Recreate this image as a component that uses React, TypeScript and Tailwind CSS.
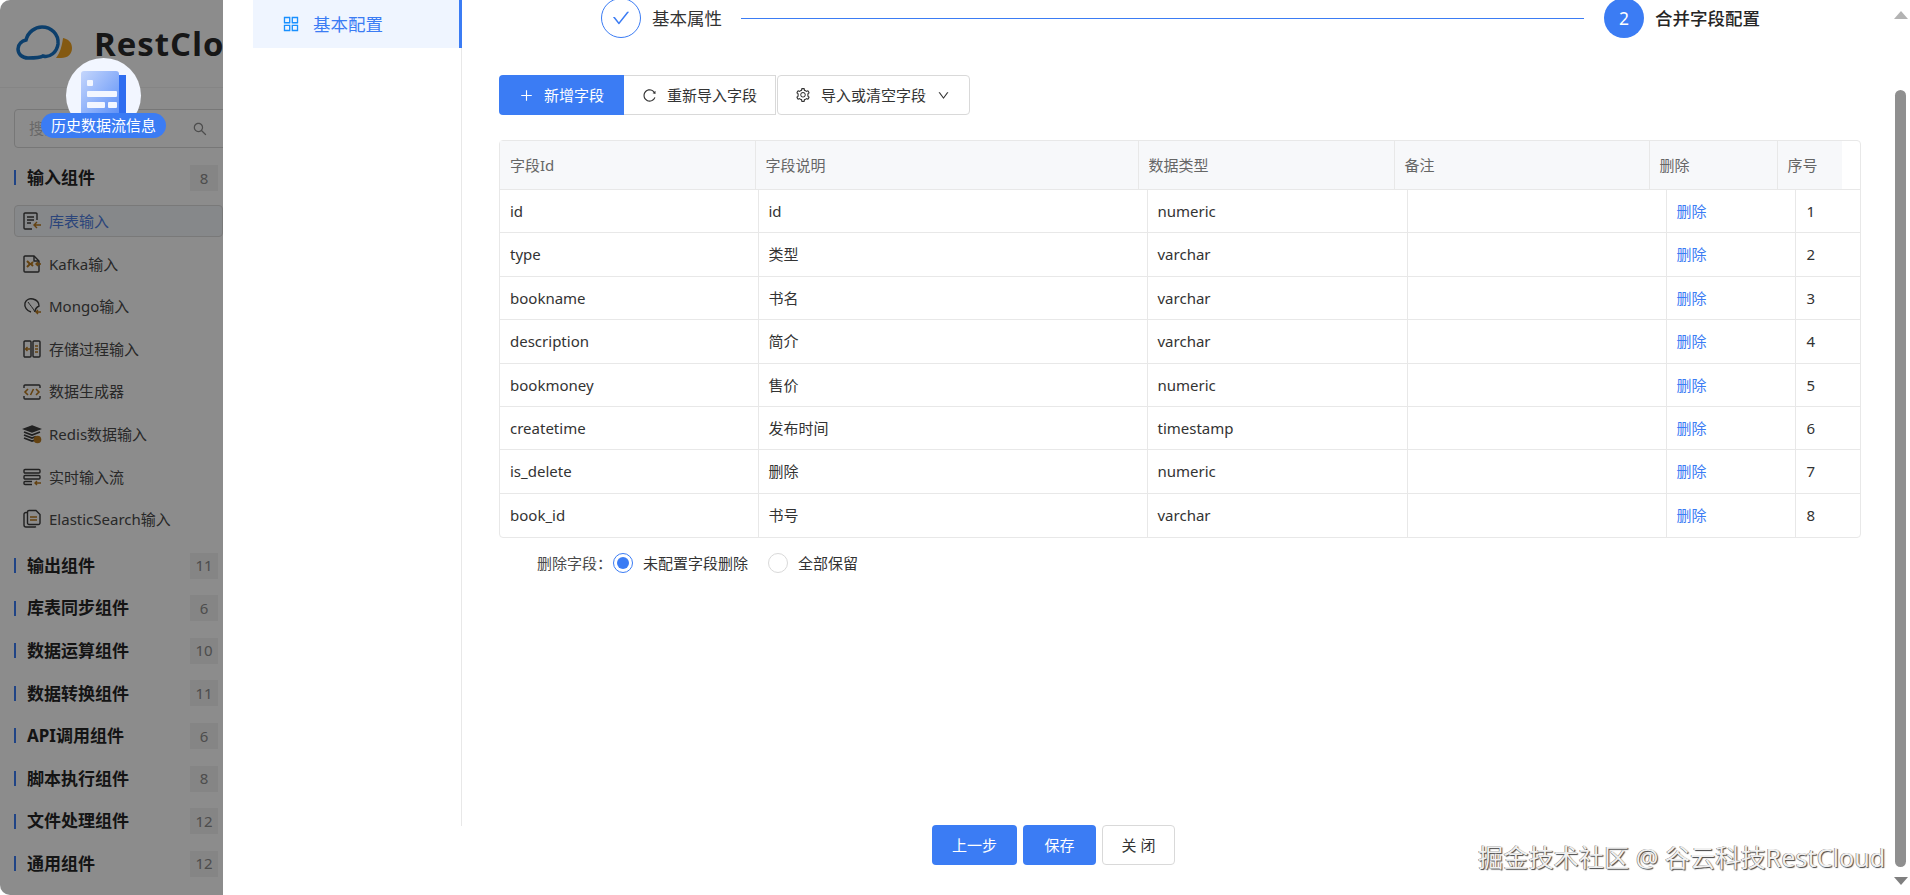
import React from "react";
import {
  AiOutlinePlus,
  AiOutlineReload,
  AiOutlineSetting,
  AiOutlineDown,
  AiOutlineCheck,
  AiOutlineSearch,
  AiOutlineAppstore,
} from "react-icons/ai";

const FONT = { fontFamily: '"Noto Sans", "Noto Sans CJK SC", sans-serif' };

const I = ({ children }: { children: React.ReactNode }) => (
  <svg viewBox="0 0 20 20" className="w-[20px] h-[20px] shrink-0" fill="none" strokeWidth="1.4" stroke="#3d3d3d">
    {children}
  </svg>
);
const O = "#b7791f";

const icons: Record<string, React.ReactNode> = {
  table: (
    <I>
      <path d="M15 9V3a1 1 0 0 0-1-1H3a1 1 0 0 0-1 1v14a1 1 0 0 0 1 1h7" />
      <path d="M5 6h7M5 9h7M5 12h4" />
      <path d="M19 14h-7M15 11l-3 3 3 3" stroke={O} />
    </I>
  ),
  kafka: (
    <I>
      <path d="M12 2H3a1 1 0 0 0-1 1v14a1 1 0 0 0 1 1h13a1 1 0 0 0 1-1V7z" />
      <path d="M12 2v5h5" />
      <path d="M5 7l3 3-3 3M8 10h2M11 8l-2 2 2 2" stroke={O} strokeWidth="2" />
      <path d="M19 10h-5M16 8l-2 2 2 2" stroke={O} />
    </I>
  ),
  mongo: (
    <I>
      <path d="M9 16C5 15 2 11 3 7c1-3 4-5 8-4 4 1 6 3 6 7-2 1-4 3-4 6" />
      <path d="M6 6c2 3 5 6 7 10" strokeWidth="1" />
      <path d="M19 16h-5M16 14l-2 2 2 2" stroke={O} />
    </I>
  ),
  proc: (
    <I>
      <rect x="2" y="2" width="7" height="16" rx="1" />
      <rect x="11" y="2" width="7" height="16" rx="1" />
      <path d="M8 10H3.500M5.500 8l-2 2 2 2" stroke={O} />
      <path d="M13 7h3M13 10h3M13 13h3" stroke={O} />
    </I>
  ),
  gen: (
    <I>
      <path d="M2 6V4a1 1 0 0 1 1-1h14a1 1 0 0 1 1 1v2M2 14v2a1 1 0 0 0 1 1h14a1 1 0 0 0 1-1v-2" />
      <path d="M6 7l-3 3 3 3M14 7l3 3-3 3M11.500 7l-3 6" stroke={O} strokeWidth="1.600" />
    </I>
  ),
  redis: (
    <I>
      <path d="M10 2l8 3-8 3-8-3z" fill="#3d3d3d" />
      <path d="M2 8l8 3 8-3M2 11l8 3 4-1.500M2 14l8 3 2-.700" strokeWidth="1.800" />
      <circle cx="15.500" cy="15.500" r="3.800" fill={O} stroke="none" />
    </I>
  ),
  stream: (
    <I>
      <rect x="2" y="2.500" width="16" height="3.500" rx="1" />
      <rect x="2" y="8.500" width="16" height="3.500" rx="1" />
      <path d="M10 14.500H3a1 1 0 0 0-1 1v1a1 1 0 0 0 1 1h7" />
      <path d="M19 16h-6M15 14l-2 2 2 2" stroke={O} />
    </I>
  ),
  es: (
    <I>
      <path d="M5 3.500H4a2 2 0 0 0-2 2V16a2 2 0 0 0 2 2h9a2 2 0 0 0 1-.300" />
      <path d="M7 1.500h7l4 4V14a1.500 1.500 0 0 1-1.500 1.500h-9.500a1.500 1.500 0 0 1-1.500-1.500V3a1.500 1.500 0 0 1 1.500-1.500z" />
      <path d="M8 8h7M8 11h7" stroke={O} />
    </I>
  ),
};

const inputs: [string, string][] = [
  ["kafka", "Kafka输入"],
  ["mongo", "Mongo输入"],
  ["proc", "存储过程输入"],
  ["gen", "数据生成器"],
  ["redis", "Redis数据输入"],
  ["stream", "实时输入流"],
  ["es", "ElasticSearch输入"],
];

const sections: [string, number][] = [
  ["库表同步组件", 6],
  ["数据运算组件", 10],
  ["数据转换组件", 11],
  ["API调用组件", 6],
  ["脚本执行组件", 8],
  ["文件处理组件", 12],
  ["通用组件", 12],
];

const Section = ({ name, n }: { name: string; n: number }) => (
  <div className="h-[42.6px] flex items-center justify-between pr-[5px]">
    <div className="flex items-center">
      <span className="w-[2px] h-[15px] bg-[#3b7cf4]" />
      <span className="ml-[11px] text-[17px] font-bold text-[#262626]">{name}</span>
    </div>
    <span className="w-[28px] h-[26px] flex items-center justify-center bg-[#f2f2f2] text-[15px] text-[#8c8c8c]">{n}</span>
  </div>
);

const rows = [
  ["id", "id", "numeric"],
  ["type", "类型", "varchar"],
  ["bookname", "书名", "varchar"],
  ["description", "简介", "varchar"],
  ["bookmoney", "售价", "numeric"],
  ["createtime", "发布时间", "timestamp"],
  ["is_delete", "删除", "numeric"],
  ["book_id", "书号", "varchar"],
];

const Sidebar = () => (
  <aside className="relative w-[223px] h-full shrink-0 overflow-hidden bg-white">
    <div className="h-[88px] flex items-center pl-[16px] bg-[#ffffff] border-b border-[#f2f2f2]">
      <svg viewBox="0 0 58 38" className="w-[58px] h-[38px] shrink-0" fill="none">
        <path d="M40 33h5c7 0 11-4 11-10s-4-9-9-10c-1 8-3 15-7 20z" fill="#f0a21f" stroke="none" />
        <path
          d="M12 33C6 33 2 29 2 24c0-5 4-8 8-9C12 7 19 2 26 2c9 0 17 7 16 17-1 8-8 14-15 12-3 2-9 2-15 2z"
          stroke="#1673c5"
          strokeWidth="3.500"
        />
      </svg>
      <span
        className="ml-[20px] text-[33px] leading-none font-bold text-[#2b2b2b] whitespace-nowrap tracking-[1px]"
        style={{ fontFamily: '"Open Sans", sans-serif' }}
      >
        RestCloud
      </span>
    </div>
    <div className="pl-[14px] mt-[21px]">
      <div className="w-[240px] h-[39px] border border-[#d9d9d9] rounded-[4px] flex items-center pl-[14px] text-[15px] text-[#bfbfbf]">
        <span className="w-[163px]">搜索</span>
        <AiOutlineSearch className="text-[#8c8c8c] text-[16px]" />
      </div>
      <div className="mt-[8.500px]">
        <Section name="输入组件" n={8} />
        <div className="pt-[0.900px] pb-[3.500px]">
          <div className="h-[42.6px] flex items-center">
            <div className="w-[240px] h-[32px] flex items-center pl-[7px] border border-[#dcdcdc] rounded-[4px] bg-[#f5f7fb]">
              {icons.table}
              <span className="ml-[7px] text-[15px] text-[#4f7fe0]">库表输入</span>
            </div>
          </div>
          {inputs.map(([k, t]) => (
            <div key={t} className="h-[42.6px] flex items-center pl-[8px]">
              {icons[k]}
              <span className="ml-[7px] text-[15px] text-[#4a4a4a] whitespace-nowrap">{t}</span>
            </div>
          ))}
        </div>
        <Section name="输出组件" n={11} />
        {sections.map(([s, n]) => (
          <Section key={s} name={s} n={n} />
        ))}
      </div>
    </div>
    <div className="absolute inset-0 bg-black/45" />
    <div className="absolute left-[66px] top-[58px] w-[75px] h-[75px] rounded-full bg-[#f2f6ff] flex justify-center overflow-hidden">
      <svg viewBox="0 0 46 46" className="w-[46px] h-[46px] mt-[13px]">
        <defs>
          <linearGradient id="doc" x1="0" y1="0" x2="1" y2="1">
            <stop offset="0" stopColor="#c5d6fc" />
            <stop offset="1" stopColor="#5b8ff7" />
          </linearGradient>
        </defs>
        <rect x="38" y="4" width="7" height="42" fill="#2f6df0" />
        <rect x="0" y="0" width="38" height="46" rx="3" fill="url(#doc)" />
        <rect x="6" y="9" width="6" height="6" rx="1" fill="#f2f6ff" />
        <rect x="6" y="20" width="30" height="6" rx="1" fill="#f2f6ff" />
        <rect x="6" y="31" width="18" height="6" rx="1" fill="#f2f6ff" />
        <rect x="27" y="31" width="9" height="6" rx="1" fill="#f2f6ff" />
      </svg>
    </div>
    <div className="absolute left-[41px] top-[113px] w-[125px] h-[25px] rounded-full bg-[#3b7cf4] flex items-center justify-center text-[15px] text-white whitespace-nowrap">
      历史数据流信息
    </div>
  </aside>
);

const headCols = "grid grid-cols-[255.500px_383px_256px_255px_128px_64px]";
const rowCols = "grid grid-cols-[258.500px_389px_260px_259px_129px_1fr]";

const Table = () => (
  <div className="ml-[37px] w-[1362px] border border-[#e8e8e8] rounded-[4px] text-[15px]">
    <div className="border-b border-[#e8e8e8] h-[49px]">
      <div className={`${headCols} h-full w-[1341.500px] bg-[#f7f8fa] text-[#666666]`}>
        {["字段Id", "字段说明", "数据类型", "备注", "删除", "序号"].map((h, i) => (
          <div key={h} className={`flex items-center pl-[10px] ${i < 5 ? "border-r border-[#e8e8e8]" : ""}`}>
            {h}
          </div>
        ))}
      </div>
    </div>
    {rows.map((r, i) => (
      <div key={r[0]} className={`${rowCols} h-[43.4px] text-[#333333] ${i < 7 ? "border-b border-[#e8e8e8]" : ""}`}>
        <div className="flex items-center pl-[10px] border-r border-[#e8e8e8]">{r[0]}</div>
        <div className="flex items-center pl-[10px] border-r border-[#e8e8e8]">{r[1]}</div>
        <div className="flex items-center pl-[10px] border-r border-[#e8e8e8]">{r[2]}</div>
        <div className="border-r border-[#e8e8e8]" />
        <div className="flex items-center pl-[10px] border-r border-[#e8e8e8] text-[#3b7cf4]">删除</div>
        <div className="flex items-center pl-[11px]">{i + 1}</div>
      </div>
    ))}
  </div>
);

const Main = () => (
  <main className="flex-1 min-w-0 h-full flex flex-col">
    <div className="flex items-center h-[40px] -mt-[2px] pl-[139px] pr-[130px] text-[17.500px] text-[#333333]">
      <span className="w-[40px] h-[40px] rounded-full border border-[#3b7cf4] flex items-center justify-center text-[#3b7cf4] text-[20px] shrink-0">
        <AiOutlineCheck />
      </span>
      <span className="ml-[11px] whitespace-nowrap">基本属性</span>
      <span className="ml-[19px] flex-1 h-px bg-[#3b7cf4]" />
      <span className="ml-[20px] w-[40px] h-[40px] rounded-full bg-[#3b7cf4] flex items-center justify-center text-white shrink-0">2</span>
      <span className="ml-[11px] font-medium whitespace-nowrap text-[#262626]">合并字段配置</span>
    </div>
    <div className="ml-[37px] mt-[37px] flex h-[40px] text-[15px] text-[#333333]">
      <button className="w-[125px] rounded-l-[4px] bg-[#3b7cf4] text-white flex items-center pl-[20px]">
        <AiOutlinePlus className="text-[15px]" />
        <span className="ml-[10px]">新增字段</span>
      </button>
      <button className="w-[152px] border border-l-0 border-[#d9d9d9] flex items-center pl-[18px]">
        <AiOutlineReload className="text-[15px]" />
        <span className="ml-[10px]">重新导入字段</span>
      </button>
      <button className="ml-px w-[193px] border border-[#d9d9d9] rounded-[4px] flex items-center pl-[17px]">
        <AiOutlineSetting className="text-[16px]" />
        <span className="ml-[10px]">导入或清空字段</span>
        <AiOutlineDown className="ml-[11px] text-[13px]" />
      </button>
    </div>
    <div className="mt-[25px]">
      <Table />
    </div>
    <div className="ml-[75px] mt-[15px] flex items-center h-[20px] text-[15px] text-[#4a4a4a]">
      <span className="w-[76px] whitespace-nowrap">删除字段：</span>
      <span className="w-[20px] h-[20px] rounded-full border border-[#3b7cf4] flex items-center justify-center">
        <span className="w-[12px] h-[12px] rounded-full bg-[#3b7cf4]" />
      </span>
      <span className="ml-[10px] w-[125px] whitespace-nowrap text-[#333333]">未配置字段删除</span>
      <span className="w-[20px] h-[20px] rounded-full border border-[#d9d9d9]" />
      <span className="ml-[10px] whitespace-nowrap text-[#333333]">全部保留</span>
    </div>
    <div className="flex-1" />
    <div className="ml-[470px] mb-[30px] flex h-[40px] text-[15px]">
      <button className="w-[85px] bg-[#3b7cf4] rounded-[4px] text-white">上一步</button>
      <button className="ml-[6px] w-[73px] bg-[#3b7cf4] rounded-[4px] text-white">保存</button>
      <button className="ml-[6px] w-[73px] border border-[#d9d9d9] rounded-[4px] text-[#333333]">关 闭</button>
    </div>
  </main>
);

const Scrollbar = () => (
  <div className="w-[20px] h-full shrink-0 flex flex-col items-center bg-white pl-[1px]">
    <svg viewBox="0 0 14 8" className="w-[14px] h-[8px] mt-[11px] shrink-0">
      <path d="M7 0l7 8H0z" fill="#b3b3b3" />
    </svg>
    <div className="w-[11px] h-[777px] mt-[71px] rounded-full bg-[#8f8f8f]" />
    <svg viewBox="0 0 14 8" className="w-[14px] h-[8px] mt-[10px] shrink-0">
      <path d="M7 8L14 0H0z" fill="#7f7f7f" />
    </svg>
  </div>
);

export default function App() {
  return (
    <div className="relative w-full h-[895px] overflow-hidden bg-white" style={FONT}>
      <div className="flex w-full h-full rounded-[10px] overflow-hidden">
        <Sidebar />
        <div className="flex-1 min-w-0 h-full flex bg-white">
          <nav className="w-[239px] h-[826px] shrink-0 pl-[30px] border-r border-[#e8e8e8]">
            <div className="relative h-[48px] bg-[#eff5ff] border-r-[3px] border-[#3b7cf4] -mr-[1px] flex items-center pl-[28px] text-[17.500px] text-[#3b7cf4]">
              <AiOutlineAppstore className="text-[20px] text-[#1890ff]" />
              <span className="ml-[12px] whitespace-nowrap">基本配置</span>
            </div>
          </nav>
          <Main />
          <Scrollbar />
        </div>
      </div>
      <div className="absolute left-[1478px] top-[840px] text-[25.200px] leading-[34px] text-[#f0f0f0] whitespace-nowrap [text-shadow:1px_1px_1px_#444,-0.5px_0_0.5px_#666]">
        掘金技术社区 @ 谷云科技RestCloud
      </div>
    </div>
  );
}
